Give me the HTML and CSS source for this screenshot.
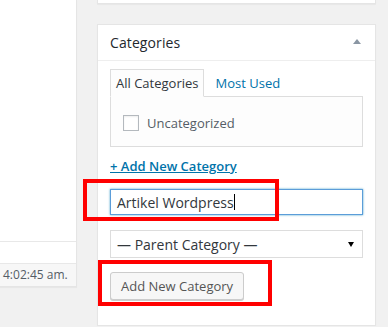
FILE: index.html
```html
<!DOCTYPE html>
<html lang="en">

<head>
    <meta charset="UTF-8">
    <meta name="viewport" content="width=device-width, initial-scale=1.0">
    <title>Categories</title>
    <link rel="stylesheet" href="styles.css">
</head>

<body>
    <div class="editor">
        <div class="editor-row"></div>
        <div class="editor-footer">4:02:45 am.</div>
    </div>

    <div class="sidebar">
        <div class="postbox postbox-prev"></div>

        <div class="postbox">
            <div class="hndle">
                <h2>Categories</h2>
                <span class="toggle"></span>
            </div>

            <div class="inside">
                <ul class="category-tabs">
                    <li class="tab-active">All Categories</li>
                    <li><a href="#">Most Used</a></li>
                </ul>

                <div class="tabs-panel">
                    <label class="cat-item">
                        <span class="checkbox"></span>
                        Uncategorized
                    </label>
                </div>

                <a href="#" class="add-toggle">+ Add New Category</a>

                <div class="new-cat-input">
                    <span class="value">Artikel Wordpress</span><span class="caret"></span>
                </div>

                <div class="parent-select">
                    <span>— Parent Category —</span>
                    <span class="select-arrow"></span>
                </div>

                <button class="button">Add New Category</button>
            </div>

            <span class="mark mark-input"></span>
            <span class="mark mark-button"></span>
        </div>
    </div>
</body>

</html>
```

FILE: styles.css
```css
* {
    box-sizing: border-box;
    font-family: 'Open Sans', 'Noto Sans', sans-serif;
}

body {
    background-color: #f1f1f1;
    margin: 0;
    padding: 0;
    display: flex;
    align-items: flex-start;
    gap: 20px;
    color: #444;
    font-size: 13px;
}

/* left editor area */
.editor {
    width: 77px;
    height: 287px;
    padding-top: 241px;
    background-color: #fff;
    border-right: 1px solid #e5e5e5;
    border-bottom: 1px solid #e5e5e5;
    box-shadow: 0 1px 1px rgba(0, 0, 0, 0.04);
}

.editor-row {
    height: 23px;
    border-top: 1px solid #e8e8e8;
    border-bottom: 1px solid #e8e8e8;
}

.editor-footer {
    height: 22px;
    padding-left: 3px;
    line-height: 22px;
    background-color: #f7f7f7;
    color: #555d66;
    font-size: 12px;
    white-space: nowrap;
    overflow: hidden;
}

/* sidebar boxes */
.sidebar {
    width: 279px;
}

.postbox {
    position: relative;
    background-color: #fff;
    border: 1px solid #e5e5e5;
    box-shadow: 0 1px 1px rgba(0, 0, 0, 0.04);
}

.postbox-prev {
    height: 4px;
    border-top: none;
    margin-bottom: 20px;
}

.hndle {
    display: flex;
    align-items: center;
    justify-content: space-between;
    height: 36px;
    padding: 0 14px 0 12px;
    border-bottom: 1px solid #eee;
}

.hndle h2 {
    margin: 0;
    font-size: 14px;
    font-weight: 400;
    letter-spacing: 0.1px;
    color: #23282d;
}

.toggle {
    width: 0;
    height: 0;
    margin-top: -3px;
    border-left: 4px solid transparent;
    border-right: 4px solid transparent;
    border-bottom: 5px solid #8a96a3;
}

.inside {
    padding: 8px 12px 25px;
}

.category-tabs {
    display: flex;
    align-items: center;
    gap: 6px;
    margin: 0;
    padding: 0;
    list-style: none;
    height: 27px;
}

.category-tabs li {
    padding: 0 5px;
    line-height: 26px;
}

.category-tabs .tab-active {
    height: 28px;
    margin-bottom: -1px;
    align-self: flex-start;
    border: 1px solid #ddd;
    border-bottom-color: #fdfdfd;
    background-color: #fdfdfd;
    color: #32373c;
}

a {
    color: #0073aa;
    text-decoration: none;
}

.tabs-panel {
    height: 51px;
    padding: 18px 12px 0;
    border: 1px solid #ddd;
    background-color: #fdfdfd;
}

.cat-item {
    display: flex;
    align-items: center;
    gap: 8px;
    color: #555d66;
    line-height: 16px;
}

.checkbox {
    width: 16px;
    height: 16px;
    border: 1px solid #b4b9be;
    background-color: #fff;
    box-shadow: inset 0 1px 2px rgba(0, 0, 0, 0.07);
}

.add-toggle {
    display: inline-block;
    margin-top: 9px;
    line-height: 20px;
    font-weight: 600;
    text-decoration: underline;
}

.new-cat-input {
    display: flex;
    align-items: center;
    height: 26px;
    margin-top: 13px;
    padding: 0 6px;
    border: 1px solid #5b9dd9;
    box-shadow: 0 0 2px rgba(30, 140, 190, 0.8);
    color: #32373c;
    font-size: 14px;
}

.caret {
    width: 1px;
    height: 16px;
    background-color: #000;
}

.parent-select {
    display: flex;
    align-items: center;
    justify-content: space-between;
    height: 28px;
    margin-top: 15px;
    padding: 0 8px 0 6px;
    border: 1px solid #ddd;
    background-color: #fff;
    color: #32373c;
    font-size: 14px;
}

.select-arrow {
    width: 0;
    height: 0;
    border-left: 3px solid transparent;
    border-right: 3px solid transparent;
    border-top: 5px solid #000;
}

.button {
    display: block;
    height: 28px;
    margin-top: 14px;
    padding: 0 10px;
    border: 1px solid #ccc;
    border-radius: 3px;
    background-color: #f7f7f7;
    box-shadow: 0 1px 0 #ccc;
    color: #555;
    font-size: 13px;
    cursor: pointer;
}

/* red annotations drawn over the screenshot */
.mark {
    position: absolute;
    border: 4px solid #ff0000;
}

.mark-input {
    left: -15px;
    top: 154px;
    width: 196px;
    height: 42px;
}

.mark-button {
    left: 0;
    top: 235px;
    width: 174px;
    height: 46px;
}
```
